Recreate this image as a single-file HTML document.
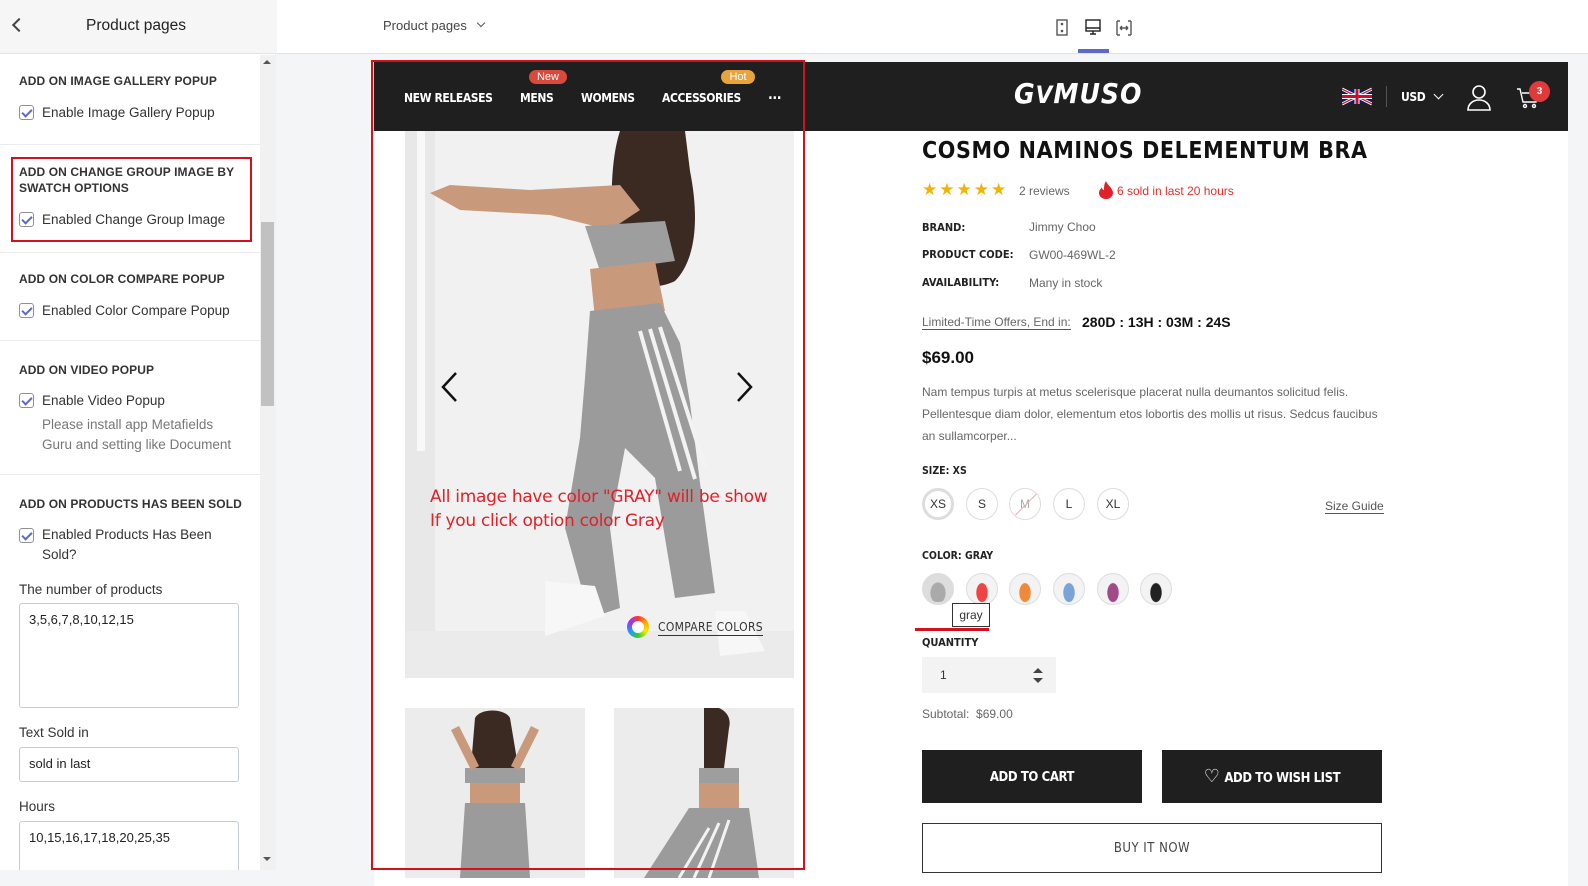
<!DOCTYPE html>
<html><head><meta charset="utf-8"><style>
*{box-sizing:border-box;margin:0;padding:0}
body{width:1588px;height:886px;overflow:hidden;background:#f4f5f7;font-family:"Liberation Sans",sans-serif;position:relative;color:#222}
.a{position:absolute}
.side{left:0;top:0;width:276px;height:886px;background:#fff;border-right:1px solid #e1e3e5}
.sh{left:0;top:0;width:276px;height:54px;background:#f6f6f7;border-bottom:1px solid #e1e3e5}
.h{font-size:12px;font-weight:bold;color:#333;letter-spacing:.1px;line-height:16px}
.cb{width:15px;height:15px;border:1px solid #8c9196;border-radius:3px;background:#fff}
.cb:after{content:"";position:absolute;left:4px;top:1px;width:4px;height:8px;border:solid #5c6ac4;border-width:0 2px 2px 0;transform:rotate(45deg)}
.lbl{font-size:13.5px;color:#333}
.sep{left:0;width:260px;height:1px;background:#ebebeb}
.inp{left:19px;width:220px;border:1px solid #c4cdd5;border-radius:3px;background:#fff;font-size:13px;padding:8px 9px;color:#222}
.nav{color:#fff;font-size:12px;font-weight:bold;font-family:"DejaVu Sans Condensed","Liberation Sans Narrow",sans-serif;letter-spacing:-.4px}
.badge{color:#fff;font-size:11px;border-radius:8px;height:14px;line-height:14px;text-align:center}
.k{font-family:"DejaVu Sans Condensed","Liberation Sans Narrow",sans-serif;font-size:11px;font-weight:bold;color:#222}
.v{font-size:12px;color:#666}
.sz{width:32px;height:32px;border-radius:50%;border:1px solid #ddd;background:#fff;font-size:12px;text-align:center;line-height:30px;color:#333}
.sw{width:32px;height:32px;border-radius:50%;border:1px solid #ddd;background:#f3f3f3;overflow:hidden}
</style></head><body>

<div class="a side"></div>
<div class="a sh"></div>
<div class="a" style="left:14px;top:20px;width:10px;height:10px;border-left:2px solid #444;border-bottom:2px solid #444;transform:rotate(45deg)"></div>
<div class="a" style="left:86px;top:17px;font-size:15.5px;color:#222">Product pages</div>
<div class="a" style="left:260px;top:55px;width:16px;height:815px;background:#f1f1f1"></div>
<div class="a" style="left:261px;top:222px;width:13px;height:184px;background:#c1c1c1"></div>
<div class="a" style="left:263px;top:60px;border:4px solid transparent;border-bottom:4px solid #555;border-top:0"></div>
<div class="a" style="left:263px;top:857px;border:4px solid transparent;border-top:4px solid #555;border-bottom:0"></div>

<div class="a h" style="left:19px;top:73px">ADD ON IMAGE GALLERY POPUP</div>
<div class="a cb" style="left:19px;top:105px"></div><div class="a lbl" style="left:42px;top:105px">Enable Image Gallery Popup</div>
<div class="a sep" style="top:144px"></div>
<div class="a" style="left:11px;top:157px;width:241px;height:85px;border:2px solid #d1111c"></div>
<div class="a h" style="left:19px;top:164px;width:220px">ADD ON CHANGE GROUP IMAGE BY SWATCH OPTIONS</div>
<div class="a cb" style="left:19px;top:212px"></div><div class="a lbl" style="left:42px;top:212px">Enabled Change Group Image</div>
<div class="a sep" style="top:252px"></div>
<div class="a h" style="left:19px;top:271px">ADD ON COLOR COMPARE POPUP</div>
<div class="a cb" style="left:19px;top:303px"></div><div class="a lbl" style="left:42px;top:303px">Enabled Color Compare Popup</div>
<div class="a sep" style="top:340px"></div>
<div class="a h" style="left:19px;top:362px">ADD ON VIDEO POPUP</div>
<div class="a cb" style="left:19px;top:393px"></div><div class="a lbl" style="left:42px;top:393px">Enable Video Popup</div>
<div class="a lbl" style="left:42px;top:415px;color:#777;line-height:20px;width:200px">Please install app Metafields Guru and setting like Document</div>
<div class="a sep" style="top:474px"></div>
<div class="a h" style="left:19px;top:496px">ADD ON PRODUCTS HAS BEEN SOLD</div>
<div class="a cb" style="left:19px;top:528px"></div><div class="a lbl" style="left:42px;line-height:20px;width:200px;top:525px">Enabled Products Has Been Sold?</div>
<div class="a lbl" style="left:19px;top:582px">The number of products</div>
<div class="a inp" style="top:603px;height:105px">3,5,6,7,8,10,12,15</div>
<div class="a lbl" style="left:19px;top:725px">Text Sold in</div>
<div class="a inp" style="top:747px;height:35px">sold in last</div>
<div class="a lbl" style="left:19px;top:799px">Hours</div>
<div class="a inp" style="top:821px;height:60px">10,15,16,17,18,20,25,35</div>
<div class="a" style="left:0;top:870px;width:276px;height:16px;background:#f4f5f7"></div>

<div class="a" style="left:277px;top:0;width:1311px;height:54px;background:#fff;border-bottom:1px solid #dfe3e8"></div>
<div class="a" style="left:383px;top:18px;font-size:13px;color:#444">Product pages</div>
<div class="a" style="left:478px;top:20px;width:6px;height:6px;border-right:1.5px solid #555;border-bottom:1.5px solid #555;transform:rotate(45deg)"></div>
<svg class="a" style="left:1052px;top:16px" width="90" height="24" viewBox="0 0 90 24" fill="none" stroke="#555" stroke-width="1.4">
<rect x="5" y="4" width="10" height="15"/><circle cx="10" cy="8" r=".6" fill="#555"/><circle cx="10" cy="15" r=".6" fill="#555"/>
<rect x="34" y="4" width="14" height="11" stroke="#222"/><path d="M34 12h14M38 18h6M41 15v3" stroke="#222"/>
<path d="M65 5v14M79 5v14M65 5h3M65 19h3M79 5h-3M79 19h-3M68 12h8M68 12l2-2M68 12l2 2M76 12l-2-2M76 12l-2 2"/>
</svg>
<div class="a" style="left:1078px;top:49px;width:31px;height:4px;background:#5c6ac4"></div>

<div class="a" style="left:374px;top:62px;width:1194px;height:824px;background:#fff"></div>
<div class="a" style="left:374px;top:62px;width:1194px;height:69px;background:#1f1f1f"></div>
<div class="a nav" style="left:404px;top:91px">NEW RELEASES</div>
<div class="a nav" style="left:520px;top:91px">MENS</div>
<div class="a nav" style="left:581px;top:91px">WOMENS</div>
<div class="a nav" style="left:662px;top:91px">ACCESSORIES</div>
<div class="a nav" style="left:768px;top:87px;font-size:14px">...</div>
<div class="a badge" style="left:529px;top:70px;width:38px;background:#d9493c">New</div>
<div class="a badge" style="left:721px;top:70px;width:34px;background:#e8a33d">Hot</div>
<div class="a" style="left:1014px;top:77px;color:#fff;font-size:28px;font-weight:bold;font-style:italic;font-family:'DejaVu Sans Condensed',sans-serif;letter-spacing:1px">G<span style="font-size:24px">V</span>MUSO</div>
<svg class="a" style="left:1342px;top:87px" width="30" height="19" viewBox="0 0 60 30"><rect width="60" height="30" fill="#012169"/><path d="M0 0L60 30M60 0L0 30" stroke="#fff" stroke-width="6"/><path d="M0 0L60 30M60 0L0 30" stroke="#c8102e" stroke-width="2.5"/><path d="M30 0v30M0 15h60" stroke="#fff" stroke-width="10"/><path d="M30 0v30M0 15h60" stroke="#c8102e" stroke-width="6"/></svg>
<div class="a" style="left:1386px;top:86px;width:1px;height:21px;background:#555"></div>
<div class="a nav" style="left:1401px;top:90px">USD</div>
<div class="a" style="left:1435px;top:91px;width:7px;height:7px;border-right:1.5px solid #fff;border-bottom:1.5px solid #fff;transform:rotate(45deg)"></div>
<svg class="a" style="left:1465px;top:83px" width="28" height="28" viewBox="0 0 28 28" fill="none" stroke="#fff" stroke-width="1.6"><circle cx="14" cy="9" r="6"/><path d="M3 27c0-6 5-10 11-10s11 4 11 10z"/></svg>
<svg class="a" style="left:1516px;top:86px" width="24" height="24" viewBox="0 0 24 24" fill="none" stroke="#fff" stroke-width="1.4"><path d="M1 3h3l3 13h13l2-9H6"/><circle cx="9" cy="20" r="1.5"/><circle cx="18" cy="20" r="1.5"/></svg>
<div class="a" style="left:1529px;top:81px;width:21px;height:21px;border-radius:50%;background:#e03a3a;color:#fff;font-size:10px;font-weight:bold;text-align:center;line-height:21px">3</div>

<svg class="a" style="left:405px;top:131px" width="389" height="547" viewBox="0 0 389 547">
<rect width="389" height="547" fill="#f1f1f1"/><rect width="30" height="547" fill="#e8e8e8"/><rect x="12" width="8" height="320" fill="#f8f8f8"/>
<path d="M0 500h389v47H0z" fill="#ebebeb"/>
<path d="M215 0c-10 30-10 80-5 120 5 40 40 40 60 30 20-20 25-60 15-110L280 0z" fill="#3b2a22"/>
<path d="M25 62l20-8 80 5 90-5 20 25-30 20-60-15-90-5z" fill="#c9997c"/>
<path d="M180 95l80-5 10 40-75 10z" fill="#9e9e9e"/>
<path d="M185 138l65-8 10 50-70 8z" fill="#c9997c"/>
<path d="M185 180l70-8 20 40 10 60 10 80 15 110-40 5-20-120-30-30-15 80 10 80-30 10-25-90 15-90 5-60z" fill="#9b9b9b"/>
<path d="M235 200l40 140M245 198l45 150M255 196l45 140" stroke="#f3f3f3" stroke-width="4"/>
<path d="M140 450l50 5 10 30-60 20z M310 480l30 0 20 40-45 5z" fill="#f7f7f7"/>
</svg>
<svg class="a" style="left:438px;top:370px" width="330" height="34" viewBox="0 0 330 34" fill="none" stroke="#111" stroke-width="2.5"><path d="M18 3L5 17l13 14M300 3l13 14-13 14"/></svg>
<div class="a" style="left:430px;top:485px;color:#e0202a;font-size:17px;line-height:24px;font-family:'DejaVu Sans',sans-serif;letter-spacing:-.3px">All image have color "GRAY" will be show<br>If you click option color Gray</div>
<div class="a" style="left:627px;top:616px;width:22px;height:22px;border-radius:50%;background:conic-gradient(#f33,#fa0,#ee0,#3c3,#29f,#93f,#f33)"></div>
<div class="a" style="left:632px;top:621px;width:12px;height:12px;border-radius:50%;background:#fff"></div>
<div class="a" style="left:658px;top:620px;font-size:12px;color:#333;font-family:'DejaVu Sans Condensed',sans-serif;letter-spacing:.3px;border-bottom:1px solid #333;padding-bottom:1px">COMPARE COLORS</div>

<svg class="a" style="left:405px;top:708px" width="180" height="170" viewBox="0 0 180 170"><rect width="180" height="170" fill="#ececec"/><path d="M70 10c5-10 30-10 35 0l10 60H65z" fill="#3b2a22"/><path d="M60 60h60v15H60z" fill="#9e9e9e"/><path d="M65 75h50v20H65z" fill="#c9997c"/><path d="M60 95h60l5 75H55z" fill="#9b9b9b"/><path d="M50 20l20 40M130 20l-20 40" stroke="#c9997c" stroke-width="9"/></svg>
<svg class="a" style="left:614px;top:708px" width="180" height="170" viewBox="0 0 180 170"><rect width="180" height="170" fill="#ececec"/><path d="M90 0c5-5 30 0 25 20l-5 40H90z" fill="#3b2a22"/><path d="M85 60h40v15H85z" fill="#9e9e9e"/><path d="M85 75h40v25H85z" fill="#c9997c"/><path d="M75 100h60l10 70H30z" fill="#9b9b9b"/><path d="M95 120l-30 50M105 115l-25 55M115 112l-20 58" stroke="#f3f3f3" stroke-width="3"/></svg>

<div class="a" style="left:371px;top:60px;width:434px;height:810px;border:2px solid #d1111c"></div>

<div class="a" style="left:922px;top:138px;font-size:23px;font-weight:bold;font-family:'DejaVu Sans Condensed',sans-serif;color:#111;letter-spacing:.6px">COSMO NAMINOS DELEMENTUM BRA</div>
<div class="a" style="left:922px;top:180px;color:#f5b301;font-size:17px;letter-spacing:2px">★★★★★</div>
<div class="a v" style="left:1019px;top:184px">2 reviews</div>
<svg class="a" style="left:1099px;top:181px" width="14" height="18" viewBox="0 0 14 18"><path d="M7 0c1 4 7 7 7 12a7 6 0 0 1-14 0c0-3 2-4 3-6 0 2 1 3 2 3 0-3 0-6 2-9z" fill="#e0202a"/></svg>
<div class="a" style="left:1117px;top:184px;font-size:12px;color:#e0302a">6 sold in last 20 hours</div>
<div class="a k" style="left:922px;top:221px">BRAND:</div><div class="a v" style="left:1029px;top:220px">Jimmy Choo</div>
<div class="a k" style="left:922px;top:248px">PRODUCT CODE:</div><div class="a v" style="left:1029px;top:248px">GW00-469WL-2</div>
<div class="a k" style="left:922px;top:276px">AVAILABILITY:</div><div class="a v" style="left:1029px;top:276px">Many in stock</div>
<div class="a v" style="left:922px;top:315px;border-bottom:1px solid #555">Limited-Time Offers, End in:</div>
<div class="a" style="left:1082px;top:314px;font-size:14px;font-weight:bold;color:#111">280D : 13H : 03M : 24S</div>
<div class="a" style="left:922px;top:348px;font-size:17px;font-weight:bold;color:#111">$69.00</div>
<div class="a" style="left:922px;top:381px;font-size:12px;color:#666;line-height:22px;width:470px">Nam tempus turpis at metus scelerisque placerat nulla deumantos solicitud felis. Pellentesque diam dolor, elementum etos lobortis des mollis ut risus. Sedcus faucibus an sullamcorper...</div>
<div class="a k" style="left:922px;top:465px;font-size:10.5px">SIZE: XS</div>
<div class="a sz" style="left:922px;top:488px;border:3px solid #ddd;line-height:26px">XS</div>
<div class="a sz" style="left:966px;top:488px">S</div>
<div class="a sz" style="left:1009px;top:488px;color:#aaa">M</div>
<div class="a" style="left:1011px;top:504px;width:30px;height:1px;background:#e8b0b0;transform:rotate(-45deg)"></div>
<div class="a sz" style="left:1053px;top:488px">L</div>
<div class="a sz" style="left:1097px;top:488px">XL</div>
<div class="a" style="left:1325px;top:499px;font-size:12px;color:#555;border-bottom:1px solid #555">Size Guide</div>
<div class="a k" style="left:922px;top:550px;font-size:10.5px">COLOR: GRAY</div>
<div class="a sw" style="left:922px;top:573px;border:3px solid #ddd;background:radial-gradient(ellipse 8px 11px at 50% 65%,#aaa 90%,#ddd 100%)"></div>
<div class="a sw" style="left:966px;top:573px;background:radial-gradient(ellipse 6px 10px at 50% 62%,#e44 90%,#f3f3f3 100%)"></div>
<div class="a sw" style="left:1009px;top:573px;background:radial-gradient(ellipse 6px 10px at 50% 62%,#f08a3a 90%,#f3f3f3 100%)"></div>
<div class="a sw" style="left:1053px;top:573px;background:radial-gradient(ellipse 6px 10px at 50% 62%,#7aa3d8 90%,#f3f3f3 100%)"></div>
<div class="a sw" style="left:1097px;top:573px;background:radial-gradient(ellipse 6px 10px at 50% 62%,#a04a8a 90%,#f3f3f3 100%)"></div>
<div class="a sw" style="left:1140px;top:573px;background:radial-gradient(ellipse 6px 10px at 50% 62%,#222 90%,#f3f3f3 100%)"></div>
<div class="a" style="left:952px;top:603px;width:38px;height:24px;border:1px solid #333;background:#fff;font-size:12px;text-align:center;line-height:22px;color:#333">gray</div>
<div class="a" style="left:915px;top:628px;width:74px;height:3px;background:#d1111c"></div>
<div class="a k" style="left:922px;top:636px;font-size:11px">QUANTITY</div>
<div class="a" style="left:922px;top:657px;width:134px;height:36px;background:#f3f3f3"></div>
<div class="a" style="left:940px;top:668px;font-size:12px;color:#333">1</div>
<div class="a" style="left:1033px;top:668px;border:5px solid transparent;border-bottom:5px solid #444;border-top:0"></div>
<div class="a" style="left:1033px;top:678px;border:5px solid transparent;border-top:5px solid #444;border-bottom:0"></div>
<div class="a" style="left:922px;top:707px;font-size:12px;color:#666">Subtotal:&nbsp; $69.00</div>
<div class="a" style="left:922px;top:750px;width:220px;height:53px;background:#1f1f1f;color:#fff;text-align:center;line-height:53px"><span class="nav" style="font-size:13px">ADD TO CART</span></div>
<div class="a" style="left:1162px;top:750px;width:220px;height:53px;background:#1f1f1f;color:#fff;text-align:center;line-height:53px"><span style="font-size:18px">♡</span> <span class="nav" style="font-size:13px">ADD TO WISH LIST</span></div>
<div class="a" style="left:922px;top:823px;width:460px;height:50px;border:1px solid #333;text-align:center;line-height:50px;font-size:13px;color:#444;letter-spacing:.5px;font-family:'DejaVu Sans Condensed',sans-serif">BUY IT NOW</div>
</body></html>
